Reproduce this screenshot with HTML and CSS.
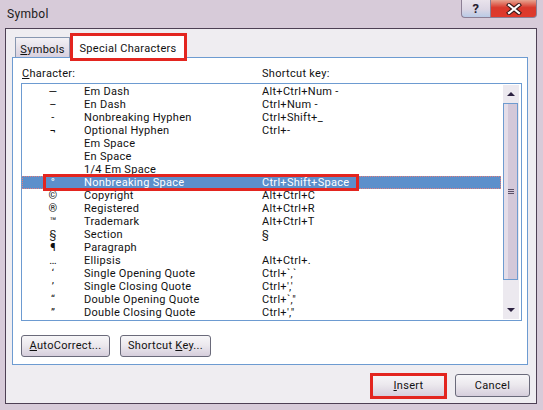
FILE: index.html
```html
<!DOCTYPE html>
<html>
<head>
<meta charset="utf-8">
<link rel="stylesheet" href="styles.css">
</head>
<body>
<div class="window">
  <div class="titlebar">
    <span class="title">Symbol</span>
    <div class="caption-btns">
      <div class="cbtn help">?</div>
      <div class="cbtn close">
        <svg width="16" height="12" viewBox="0 0 16 12">
          <path d="M3 2 L13 10 M13 2 L3 10" stroke="#3b1a1a" stroke-width="4.2" stroke-linecap="square" fill="none"/>
          <path d="M3 2 L13 10 M13 2 L3 10" stroke="#ffffff" stroke-width="2.2" stroke-linecap="square" fill="none"/>
        </svg>
      </div>
    </div>
  </div>
  <div class="client">
    <div class="tabs">
      <div class="tab"><u>S</u>ymbols</div>
      <div class="tab active">Special Characters<span class="mark mark-tab"></span></div>
    </div>
    <div class="panel">
      <div class="labels"><span><u>C</u>haracter:</span><span>Shortcut key:</span></div>
      <div class="listbox">
        <div class="rows">
          <div class="row"><span class="g">—</span><span>Em Dash</span><span>Alt+Ctrl+Num -</span></div>
          <div class="row"><span class="g">–</span><span>En Dash</span><span>Ctrl+Num -</span></div>
          <div class="row"><span class="g">-</span><span>Nonbreaking Hyphen</span><span>Ctrl+Shift+_</span></div>
          <div class="row"><span class="g">¬</span><span>Optional Hyphen</span><span>Ctrl+-</span></div>
          <div class="row"><span class="g"></span><span>Em Space</span><span></span></div>
          <div class="row"><span class="g"></span><span>En Space</span><span></span></div>
          <div class="row"><span class="g"></span><span>1/4 Em Space</span><span></span></div>
          <div class="row selected"><span class="g">°</span><span>Nonbreaking Space</span><span>Ctrl+Shift+Space</span><span class="mark mark-row"></span></div>
          <div class="row"><span class="g">©</span><span>Copyright</span><span>Alt+Ctrl+C</span></div>
          <div class="row"><span class="g">®</span><span>Registered</span><span>Alt+Ctrl+R</span></div>
          <div class="row"><span class="g">™</span><span>Trademark</span><span>Alt+Ctrl+T</span></div>
          <div class="row"><span class="g">§</span><span>Section</span><span>§</span></div>
          <div class="row"><span class="g">¶</span><span>Paragraph</span><span></span></div>
          <div class="row"><span class="g">…</span><span>Ellipsis</span><span>Alt+Ctrl+.</span></div>
          <div class="row"><span class="g">‘</span><span>Single Opening Quote</span><span>Ctrl+`,`</span></div>
          <div class="row"><span class="g">’</span><span>Single Closing Quote</span><span>Ctrl+','</span></div>
          <div class="row"><span class="g">“</span><span>Double Opening Quote</span><span>Ctrl+`,"</span></div>
          <div class="row"><span class="g">”</span><span>Double Closing Quote</span><span>Ctrl+',"</span></div>
        </div>
        <div class="scrollbar">
          <div class="arrow up"></div>
          <div class="thumb"><span class="grip"></span></div>
          <div class="track"></div>
          <div class="arrow down"></div>
        </div>
      </div>
      <div class="panel-btns">
        <div class="btn btn-auto"><u>A</u>utoCorrect...</div>
        <div class="btn btn-short">Shortcut <u>K</u>ey...</div>
      </div>
    </div>
    <div class="dlg-btns">
      <div class="btn btn-dlg"><u>I</u>nsert<span class="mark mark-insert"></span></div>
      <div class="btn btn-dlg">Cancel</div>
    </div>
  </div>
</div>
</body>
</html>
```
FILE: styles.css
```css
* { box-sizing: border-box; }
html, body { margin: 0; padding: 0; }
body {
  font-family: Roboto, "Liberation Sans", sans-serif;
  font-size: 11px;
  letter-spacing: 0.3px;
  color: #111;
  background: #d7cbd9;
}
u { text-decoration: underline; text-underline-offset: 1px; }

.window {
  width: 543px;
  height: 410px;
  background: #d7cbd9;
  padding: 0 6px 6px 5px;
  display: flex;
  flex-direction: column;
}

.titlebar {
  height: 28px;
  display: flex;
  justify-content: space-between;
  align-items: flex-start;
}
.title {
  padding-left: 2px;
  line-height: 28px;
  font-size: 12px;
  color: #1a1a1a;
}
.caption-btns { display: flex; }
.cbtn {
  height: 18px;
  display: flex;
  align-items: center;
  justify-content: center;
  border: 1px solid #8c7f95;
  border-top: none;
}
.help {
  width: 29px;
  background: linear-gradient(#e9e3ec, #dcd6e4 55%, #b9cbe6);
  border-radius: 0 0 0 4px;
  font-weight: bold;
  font-size: 13px;
  color: #262030;
  border-right: none;
}
.close {
  width: 47px;
  background: linear-gradient(#e7a490, #d9392c 45%, #e03a2c);
  border-radius: 0 0 4px 0;
}

.client {
  flex: 1;
  border: 1px solid #4d4054;
  background: #efedf1;
  display: flex;
  flex-direction: column;
}

.tabs {
  margin: 4px 0 0 9px;
  height: 24px;
  display: flex;
  align-items: flex-end;
}
.tab {
  height: 20px;
  width: 55px;
  border: 1px solid #8897b0;
  border-bottom: none;
  background: linear-gradient(#f3f1f5, #d8d0de);
  text-align: center;
  padding-top: 2px;
  line-height: 19px;
  color: #111;
}
.tab.active {
  position: relative;
  z-index: 1;
  height: 25px;
  width: 116px;
  margin-bottom: -1px;
  background: #fff;
  border-color: #6d9bd1;
  padding-top: 4px;
  line-height: 22px;
}

.panel {
  margin-left: 6px;
  width: 516px;
  height: 308px;
  border: 1px solid #6d9bd1;
  background: #fff;
}

.labels {
  display: grid;
  grid-template-columns: 240px auto;
  padding: 9px 0 0 9px;
  height: 23px;
  line-height: 14px;
  margin-bottom: 2px;
}

.listbox {
  margin-left: 8px;
  width: 501px;
  height: 238px;
  border: 1px solid #6d9bd1;
  display: flex;
  align-items: flex-start;
  padding-top: 1px;
}
.rows { width: 479px; }
.row {
  display: grid;
  grid-template-columns: 62px 178px auto;
  height: 13px;
  line-height: 13px;
  white-space: nowrap;
}
.row .g { text-align: center; }
.row.selected {
  position: relative;
  background: #5c8fcb;
  color: #fff;
  outline: 1px dotted #e08080;
  outline-offset: -1px;
}

.scrollbar {
  margin-left: 2px;
  width: 16px;
  height: 234px;
  background: #ece9ef;
  display: flex;
  flex-direction: column;
}
.arrow {
  height: 18px;
  display: flex;
  align-items: center;
  justify-content: center;
}
.arrow::before {
  content: "";
  width: 0; height: 0;
  border-left: 4px solid transparent;
  border-right: 4px solid transparent;
}
.arrow.up::before { border-bottom: 4px solid #2b2140; }
.arrow.down::before { border-top: 4px solid #2b2140; }
.thumb {
  height: 177px;
  width: 15px;
  border: 1px solid #6e9bd0;
  background: linear-gradient(90deg, #e4dde8 0 4px, #d3c8d9 4px);
  display: flex;
  align-items: center;
  justify-content: center;
}
.grip {
  width: 6px;
  height: 5px;
  border-top: 1px solid #5a5068;
  border-bottom: 1px solid #5a5068;
  background: linear-gradient(#d3c8d9 0 1px, #5a5068 1px 2px, #d3c8d9 2px);
}
.track { flex: 1; }

.panel-btns {
  display: flex;
  gap: 10px;
  margin: 14px 0 0 8px;
}
.btn {
  height: 22px;
  border: 1px solid #6a6a7a;
  border-radius: 3px;
  background: linear-gradient(#f7f6f8, #ece9ee 45%, #d6cedc);
  text-align: center;
  line-height: 20px;
  color: #111;
}
.btn-auto { width: 89px; }
.btn-short { width: 91px; }

.dlg-btns {
  display: flex;
  justify-content: flex-end;
  gap: 9px;
  padding-right: 6px;
  margin-top: 9px;
}
.btn-dlg {
  width: 75px;
  height: 23px;
  line-height: 21px;
  position: relative;
}

.mark {
  position: absolute;
  border: 3px solid #e3251f;
  pointer-events: none;
}
.mark-tab { left: -1px; top: -1px; width: 117px; height: 28px; }
.mark-row { left: 21px; top: -2px; width: 316px; height: 17px; }
.mark-insert { left: -2px; top: -2px; width: 77px; height: 26px; }
```
